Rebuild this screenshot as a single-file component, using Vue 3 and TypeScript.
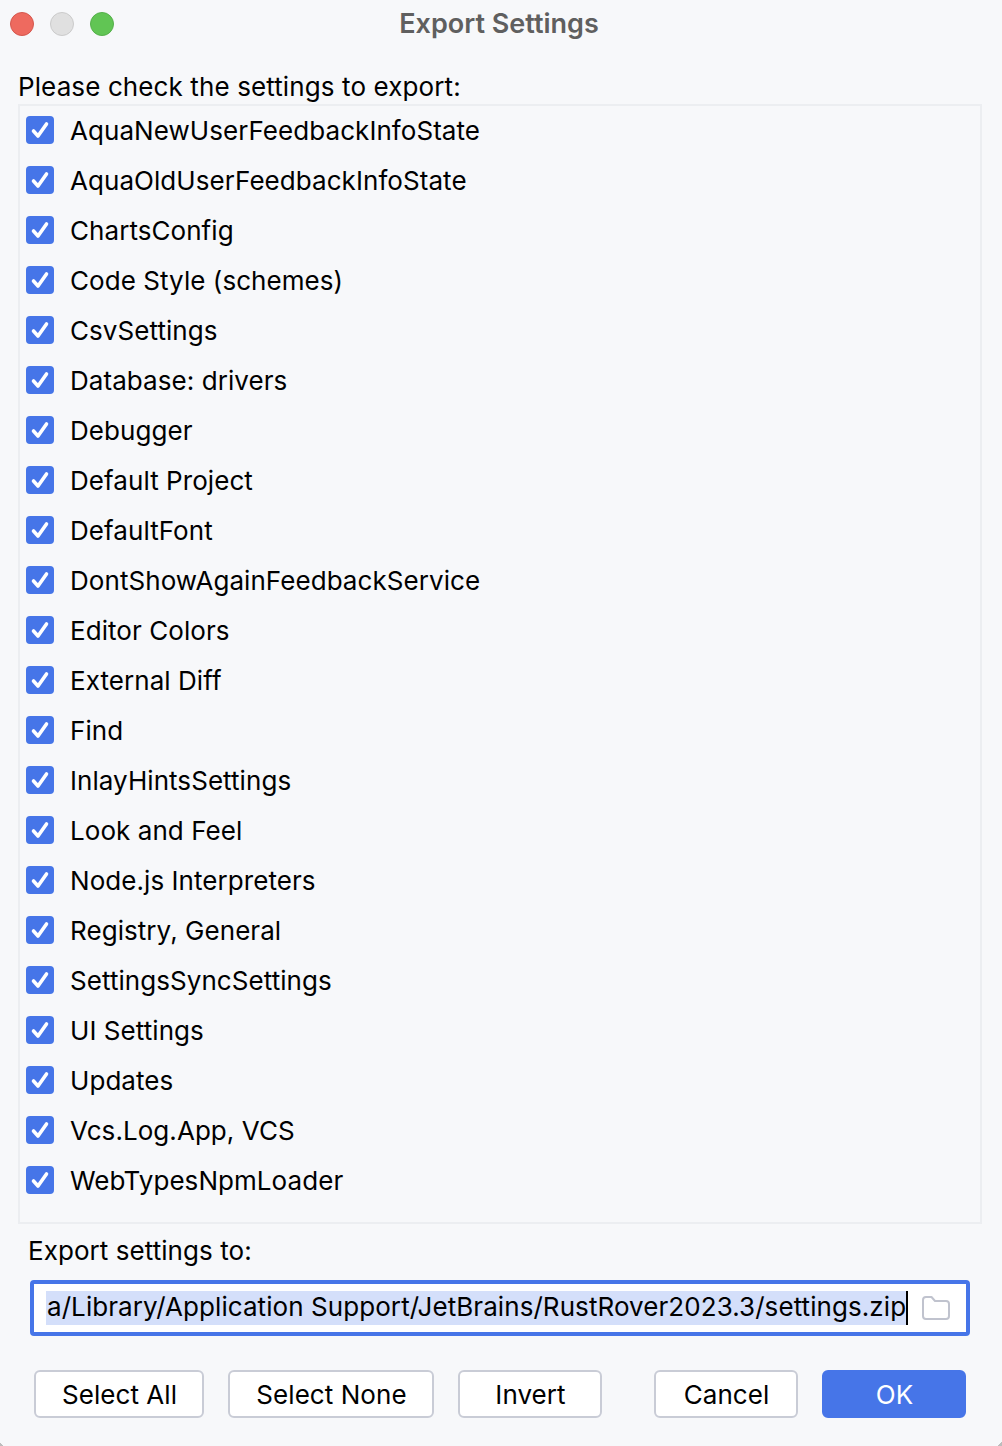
<script setup lang="ts">
const settings: string[] = [
  'AquaNewUserFeedbackInfoState',
  'AquaOldUserFeedbackInfoState',
  'ChartsConfig',
  'Code Style (schemes)',
  'CsvSettings',
  'Database: drivers',
  'Debugger',
  'Default Project',
  'DefaultFont',
  'DontShowAgainFeedbackService',
  'Editor Colors',
  'External Diff',
  'Find',
  'InlayHintsSettings',
  'Look and Feel',
  'Node.js Interpreters',
  'Registry, General',
  'SettingsSyncSettings',
  'UI Settings',
  'Updates',
  'Vcs.Log.App, VCS',
  'WebTypesNpmLoader',
]
</script>

<template>
  <div class="dialog">
    <header class="titlebar">
      <div class="lights">
        <span class="light red"></span>
        <span class="light grey"></span>
        <span class="light green"></span>
      </div>
      <h1 class="title">Export Settings</h1>
    </header>

    <p class="prompt">Please check the settings to export:</p>

    <ul class="list">
      <li v-for="name in settings" :key="name" class="row">
        <span class="check">
          <svg width="28" height="28" viewBox="0 0 28 28" fill="none">
            <path d="M7.5 15L12 20L20.5 8" stroke="#fff" stroke-width="3.6" stroke-linecap="round" stroke-linejoin="round" />
          </svg>
        </span>
        <span class="row-label">{{ name }}</span>
      </li>
    </ul>

    <p class="path-label">Export settings to:</p>

    <div class="field">
      <span class="selection">a/Library/Application Support/JetBrains/RustRover2023.3/settings.zip</span>
      <span class="caret"></span>
      <svg class="folder" width="28" height="24" viewBox="0 0 28 24" fill="none">
        <path d="M1 4A3 3 0 0 1 4 1H9.5L13 5H24A3 3 0 0 1 27 8V20A3 3 0 0 1 24 23H4A3 3 0 0 1 1 20Z" stroke="#c0c3ce" stroke-width="2" stroke-linejoin="round" />
      </svg>
    </div>

    <footer class="actions">
      <button class="btn btn-all">Select All</button>
      <button class="btn btn-none">Select None</button>
      <button class="btn btn-invert">Invert</button>
      <button class="btn btn-cancel">Cancel</button>
      <button class="btn btn-ok">OK</button>
    </footer>

    <span class="corner corner-left"></span>
    <span class="corner corner-right"></span>
  </div>
</template>

<style>
html,
body {
  margin: 0;
  background: #f7f8fa;
}
</style>

<style scoped>
.dialog {
  position: relative;
  box-sizing: border-box;
  width: 1002px;
  height: 1446px;
  padding: 0 20px 0 18px;
  background: #f7f8fa;
  color: #000;
  font-family: Inter, "Liberation Sans", sans-serif;
  font-size: 26px;
  letter-spacing: 0.06px;
  overflow: hidden;
}

.titlebar {
  position: relative;
  left: -1px;
  height: 46px;
  display: flex;
  align-items: center;
  justify-content: center;
}

.lights {
  position: absolute;
  left: -7px;
  top: 12px;
  display: flex;
  gap: 16px;
}

.light {
  box-sizing: border-box;
  width: 24px;
  height: 24px;
  border-radius: 50%;
  border: 1px solid;
}

.red {
  background: #ee6a5f;
  border-color: #d5574d;
}

.grey {
  background: #e0e0e0;
  border-color: #cbcbcb;
}

.green {
  background: #61c554;
  border-color: #55b04a;
}

.title {
  margin: 0;
  font-size: 27px;
  font-weight: 600;
  letter-spacing: 0;
  color: #5f5f5f;
}

.prompt {
  margin: 24px 0 0;
  height: 34px;
  line-height: 34px;
  letter-spacing: 0.11px;
}

.list {
  box-sizing: border-box;
  height: 1120px;
  margin: 0;
  padding: 0 0 0 6px;
  list-style: none;
  border: 2px solid #eceef1;
}

.row {
  height: 50px;
  display: flex;
  align-items: center;
  gap: 16px;
}

.row:first-child {
  margin-top: -1px;
}

.check {
  width: 28px;
  height: 28px;
  border-radius: 4px;
  background: #4675e8;
  flex: none;
}

.check svg {
  display: block;
}

.path-label {
  margin: 10px 0 0 10px;
  height: 34px;
  line-height: 34px;
}

.field {
  box-sizing: border-box;
  height: 56px;
  margin: 12px 12px 0 12px;
  padding-left: 12px;
  display: flex;
  align-items: center;
  background: #fff;
  border: 4px solid #4675e8;
  border-radius: 4px;
}

.selection {
  height: 34px;
  line-height: 32px;
  padding-left: 1px;
  background: #d4dffa;
  letter-spacing: 0.07px;
  white-space: nowrap;
}

.caret {
  width: 2px;
  height: 34px;
  background: #000;
}

.folder {
  margin-left: 14px;
  flex: none;
}

.actions {
  display: flex;
  margin: 34px 0 0 16px;
}

.btn {
  box-sizing: border-box;
  height: 48px;
  padding: 0 0 0 1px;
  background: #fff;
  border: 2px solid #c9ccd6;
  border-radius: 6px;
  color: #000;
  font: inherit;
  letter-spacing: inherit;
}

.btn-all {
  width: 170px;
}

.btn-none {
  width: 206px;
  margin-left: 24px;
}

.btn-invert {
  width: 144px;
  margin-left: 24px;
}

.btn-cancel {
  width: 144px;
  margin-left: 52px;
}

.btn-ok {
  width: 144px;
  margin-left: 24px;
  background: #4675e8;
  border-color: #4675e8;
  color: #fff;
}

/* window corner bits left in the capture */
.corner {
  position: absolute;
  bottom: 0;
  width: 6px;
  height: 6px;
}

.corner-left {
  left: 0;
  background: linear-gradient(45deg, #bdbdbd 30%, transparent 31%);
}

.corner-right {
  right: 0;
  background: linear-gradient(315deg, #bdbdbd 40%, transparent 41%);
}
</style>
